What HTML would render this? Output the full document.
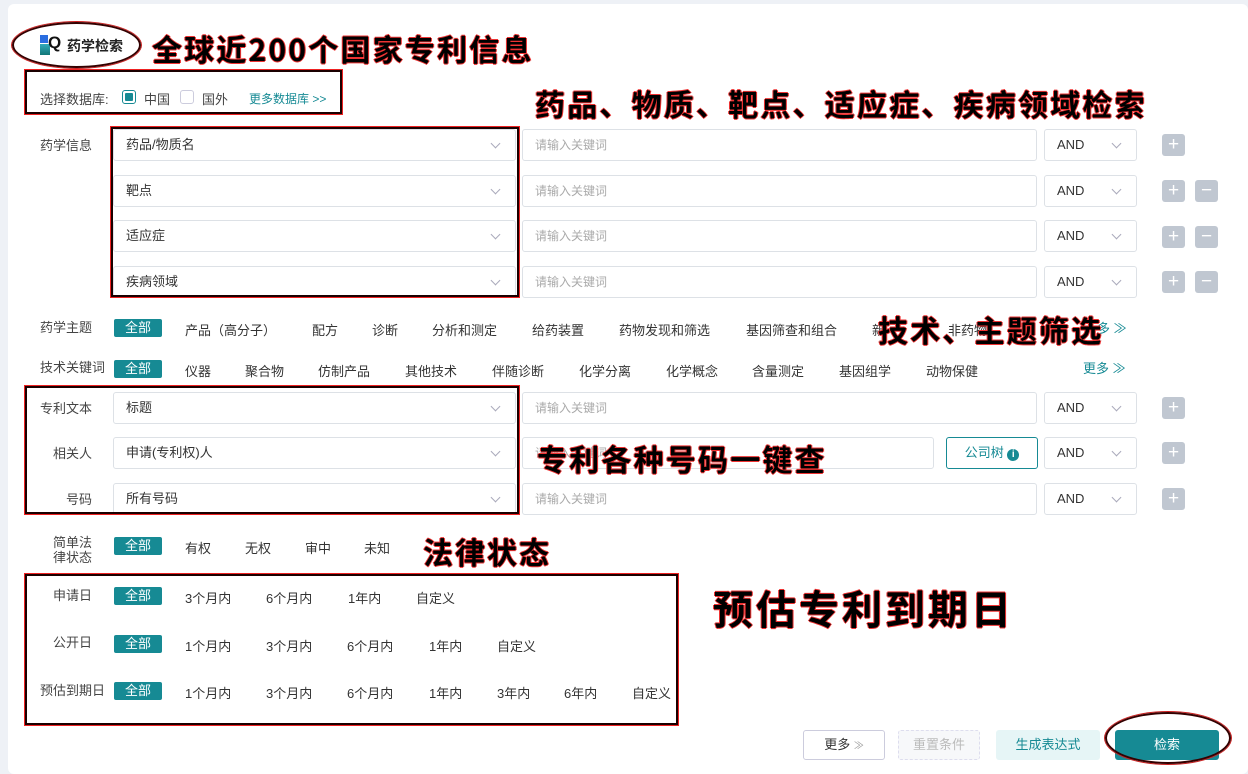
<!DOCTYPE html>
<html><head><meta charset="utf-8"><style>
*{margin:0;padding:0;box-sizing:border-box}
body{width:1248px;height:769px;background:#eef1f6;position:relative;overflow:hidden;font-family:"Liberation Sans","Noto Sans CJK SC",sans-serif;font-size:13px;color:#333}
.card{position:absolute;left:8px;top:4px;width:1240px;height:770px;background:#fff;border-radius:6px}
.a{position:absolute;white-space:nowrap}
.lab{position:absolute;color:#444;font-size:13px;white-space:nowrap}
.sel{position:absolute;height:32px;border:1px solid #dde1e6;border-radius:3px;background:#fff;padding-left:12px;line-height:30px;font-size:13px;color:#333}
.sel:after{content:"";position:absolute;right:16px;top:10px;width:6px;height:6px;border-right:1px solid #aab;border-bottom:1px solid #aab;transform:rotate(45deg)}
.inp{position:absolute;height:32px;border:1px solid #dde1e6;border-radius:3px;background:#fff;padding-left:12px;line-height:30px;font-size:12px;color:#aaa}
.pl{position:absolute;width:23px;height:22px;background:#c0c7d1;border-radius:3px;color:#fff;text-align:center;line-height:21px;font-size:19px}
.tag{position:absolute;height:18px;width:48px;background:#168a94;color:#fff;text-align:center;line-height:18px;font-size:13px;border-radius:2px}
.it{position:absolute;font-size:13px;color:#333;white-space:nowrap}
.box{position:absolute;border:2px solid #1a0000;box-shadow:0 0 0 1px #e22}
.big{position:absolute;font-weight:bold;color:#000;white-space:nowrap;text-shadow:1px 0 #e33,-1px 0 #e33,0 1px #e33,0 -1px #e33;letter-spacing:1px;font-family:"WenQuanYi Zen Hei","Noto Sans CJK SC",sans-serif}
.ell{position:absolute;border:2px solid #300;border-radius:50%;box-shadow:0 0 0 1px #c22}
</style></head><body>
<div class="card"></div>

<div class="ell" style="left:12px;top:22px;width:129px;height:46px"></div>
<div class="a" style="left:40px;top:35px;width:8px;height:8px;background:#2a6de0"></div>
<div class="a" style="left:40px;top:44px;width:10px;height:11px;background:linear-gradient(#3ab,#177)"></div>
<div class="a" style="left:48px;top:33px;font-weight:bold;font-size:17px;color:#111">Q</div>
<div class="a" style="left:67px;top:36px;font-weight:bold;font-size:14px;color:#222">药学检索</div>
<div class="big" style="left:152px;top:26px;font-size:30px;letter-spacing:2.2px">全球近200个国家专利信息</div>

<div class="box" style="left:25px;top:70px;width:317px;height:44px"></div>
<div class="lab" style="left:40px;top:89px">选择数据库:</div>
<div class="a" style="left:122px;top:90px;width:14px;height:14px;border:1px solid #168a94;border-radius:3px"><div style="margin:2px;width:8px;height:8px;background:#168a94;border-radius:1px"></div></div>
<div class="lab" style="left:144px;top:89px">中国</div>
<div class="a" style="left:180px;top:90px;width:14px;height:14px;border:1px solid #ccd;border-radius:3px"></div>
<div class="lab" style="left:202px;top:89px">国外</div>
<div class="a" style="left:249px;top:90px;font-size:12px;color:#168a94">更多数据库 &gt;&gt;</div>
<div class="big" style="left:535px;top:81px;font-size:30px;letter-spacing:2.2px">药品、物质、靶点、适应症、疾病领域检索</div>

<div class="lab" style="left:40px;top:135px">药学信息</div>
<div class="sel" style="left:113px;top:129px;width:403px">药品/物质名</div>
<div class="sel" style="left:113px;top:175px;width:403px">靶点</div>
<div class="sel" style="left:113px;top:220px;width:403px">适应症</div>
<div class="sel" style="left:113px;top:266px;width:403px">疾病领域</div>
<div class="inp" style="left:522px;top:129px;width:515px">请输入关键词</div>
<div class="inp" style="left:522px;top:175px;width:515px">请输入关键词</div>
<div class="inp" style="left:522px;top:220px;width:515px">请输入关键词</div>
<div class="inp" style="left:522px;top:266px;width:515px">请输入关键词</div>
<div class="sel" style="left:1044px;top:129px;width:93px">AND</div>
<div class="sel" style="left:1044px;top:175px;width:93px">AND</div>
<div class="sel" style="left:1044px;top:220px;width:93px">AND</div>
<div class="sel" style="left:1044px;top:266px;width:93px">AND</div>
<div class="pl" style="left:1162px;top:134px">+</div>
<div class="pl" style="left:1162px;top:180px">+</div><div class="pl" style="left:1195px;top:180px">−</div>
<div class="pl" style="left:1162px;top:226px">+</div><div class="pl" style="left:1195px;top:226px">−</div>
<div class="pl" style="left:1162px;top:271px">+</div><div class="pl" style="left:1195px;top:271px">−</div>
<div class="box" style="left:111px;top:127px;width:408px;height:170px"></div>

<div class="lab" style="left:40px;top:317px">药学主题</div>
<div class="tag" style="left:114px;top:319px">全部</div>
<div class="it" style="left:185px;top:320px">产品（高分子）</div>
<div class="it" style="left:312px;top:320px">配方</div>
<div class="it" style="left:372px;top:320px">诊断</div>
<div class="it" style="left:432px;top:320px">分析和测定</div>
<div class="it" style="left:532px;top:320px">给药装置</div>
<div class="it" style="left:619px;top:320px">药物发现和筛选</div>
<div class="it" style="left:746px;top:320px">基因筛查和组合</div>
<div class="it" style="left:872px;top:320px">新</div>
<div class="it" style="left:948px;top:320px">非药物</div>
<div class="it" style="left:1097px;top:318px;color:#168a94">多 ≫</div>
<div class="big" style="left:878px;top:307px;font-size:30px;letter-spacing:2.2px">技术、主题筛选</div>

<div class="lab" style="left:40px;top:357px">技术关键词</div>
<div class="tag" style="left:114px;top:360px">全部</div>
<div class="it" style="left:185px;top:361px">仪器</div>
<div class="it" style="left:245px;top:361px">聚合物</div>
<div class="it" style="left:318px;top:361px">仿制产品</div>
<div class="it" style="left:405px;top:361px">其他技术</div>
<div class="it" style="left:492px;top:361px">伴随诊断</div>
<div class="it" style="left:579px;top:361px">化学分离</div>
<div class="it" style="left:666px;top:361px">化学概念</div>
<div class="it" style="left:752px;top:361px">含量测定</div>
<div class="it" style="left:839px;top:361px">基因组学</div>
<div class="it" style="left:926px;top:361px">动物保健</div>
<div class="it" style="left:1083px;top:358px;color:#168a94">更多 ≫</div>

<div class="lab" style="left:40px;top:398px">专利文本</div>
<div class="lab" style="left:53px;top:443px">相关人</div>
<div class="lab" style="left:66px;top:489px">号码</div>
<div class="sel" style="left:113px;top:392px;width:403px">标题</div>
<div class="sel" style="left:113px;top:437px;width:403px">申请(专利权)人</div>
<div class="sel" style="left:113px;top:483px;width:403px">所有号码</div>
<div class="inp" style="left:522px;top:392px;width:515px">请输入关键词</div>
<div class="inp" style="left:522px;top:437px;width:412px">请输入关键词</div>
<div class="a" style="left:946px;top:437px;width:92px;height:32px;border:1px solid #168a94;border-radius:3px;color:#168a94;line-height:30px;text-align:center">公司树 <span style="display:inline-block;width:12px;height:12px;border-radius:50%;background:#168a94;color:#fff;font-size:10px;line-height:12px;font-weight:bold">i</span></div>
<div class="inp" style="left:522px;top:483px;width:515px">请输入关键词</div>
<div class="sel" style="left:1044px;top:392px;width:93px">AND</div>
<div class="sel" style="left:1044px;top:437px;width:93px">AND</div>
<div class="sel" style="left:1044px;top:483px;width:93px">AND</div>
<div class="pl" style="left:1162px;top:397px">+</div>
<div class="pl" style="left:1162px;top:442px">+</div>
<div class="pl" style="left:1162px;top:488px">+</div>
<div class="box" style="left:25px;top:386px;width:494px;height:128px"></div>
<div class="big" style="left:537px;top:436px;font-size:30px;letter-spacing:2.2px">专利各种号码一键查</div>

<div class="lab" style="left:53px;top:535px;line-height:15px">简单法<br>律状态</div>
<div class="tag" style="left:114px;top:537px">全部</div>
<div class="it" style="left:185px;top:538px">有权</div>
<div class="it" style="left:245px;top:538px">无权</div>
<div class="it" style="left:305px;top:538px">审中</div>
<div class="it" style="left:364px;top:538px">未知</div>
<div class="big" style="left:423px;top:529px;font-size:30px;letter-spacing:2px">法律状态</div>

<div class="box" style="left:25px;top:574px;width:653px;height:151px"></div>
<div class="lab" style="left:53px;top:585px">申请日</div>
<div class="tag" style="left:114px;top:587px">全部</div>
<div class="it" style="left:185px;top:588px">3个月内</div><div class="it" style="left:266px;top:588px">6个月内</div><div class="it" style="left:348px;top:588px">1年内</div><div class="it" style="left:416px;top:588px">自定义</div>
<div class="lab" style="left:53px;top:632px">公开日</div>
<div class="tag" style="left:114px;top:635px">全部</div>
<div class="it" style="left:185px;top:636px">1个月内</div><div class="it" style="left:266px;top:636px">3个月内</div><div class="it" style="left:347px;top:636px">6个月内</div><div class="it" style="left:429px;top:636px">1年内</div><div class="it" style="left:497px;top:636px">自定义</div>
<div class="lab" style="left:40px;top:680px">预估到期日</div>
<div class="tag" style="left:114px;top:682px">全部</div>
<div class="it" style="left:185px;top:683px">1个月内</div><div class="it" style="left:266px;top:683px">3个月内</div><div class="it" style="left:347px;top:683px">6个月内</div><div class="it" style="left:429px;top:683px">1年内</div><div class="it" style="left:497px;top:683px">3年内</div><div class="it" style="left:564px;top:683px">6年内</div><div class="it" style="left:632px;top:683px">自定义</div>
<div class="big" style="left:713px;top:578px;font-size:40px;letter-spacing:3px">预估专利到期日</div>

<div class="a" style="left:803px;top:730px;width:82px;height:30px;border:1px solid #ccd;border-radius:3px;text-align:center;line-height:28px;background:#fff">更多 <span style="color:#999;font-size:10px">≫</span></div>
<div class="a" style="left:898px;top:730px;width:82px;height:30px;border:1px dashed #dde;border-radius:3px;text-align:center;line-height:28px;color:#bbb;background:#f7f8fa">重置条件</div>
<div class="a" style="left:996px;top:730px;width:104px;height:30px;border-radius:3px;text-align:center;line-height:30px;color:#168a94;background:#e6f5f6">生成表达式</div>
<div class="a" style="left:1115px;top:730px;width:104px;height:30px;border-radius:3px;text-align:center;line-height:30px;color:#fff;background:#168a94">检索</div>
<div class="ell" style="left:1105px;top:712px;width:126px;height:52px"></div>
</body></html>
